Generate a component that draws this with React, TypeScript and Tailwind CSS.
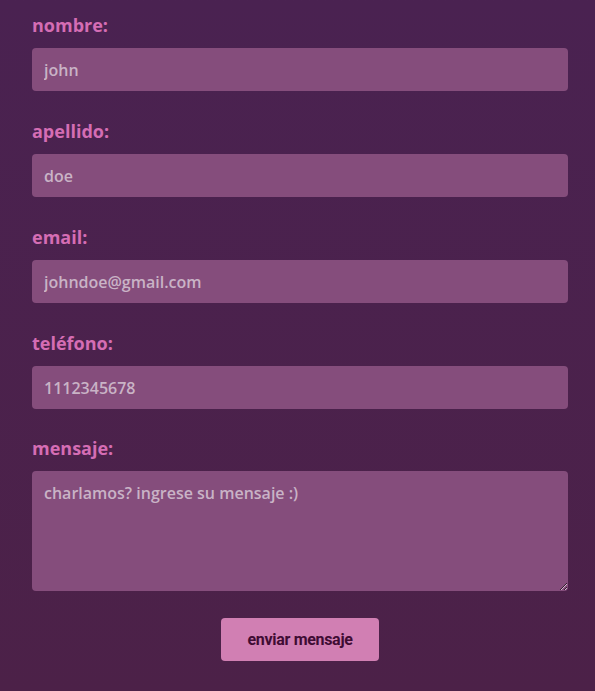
import React from 'react';

const fields = [
  { label: 'nombre:', placeholder: 'john', type: 'text' },
  { label: 'apellido:', placeholder: 'doe', type: 'text' },
  { label: 'email:', placeholder: 'johndoe@gmail.com', type: 'email' },
  { label: 'teléfono:', placeholder: '1112345678', type: 'tel' },
];

const inputClass =
  'w-full rounded bg-[#854d7c] px-3 text-[16px] font-semibold text-[#e6d6e4] placeholder:text-[#c9b3c6] outline-none';

const labelClass = 'mb-[10px] h-[28px] text-[18px] leading-[30px] font-bold text-[#d56db4]';

const App: React.FC = () => {
  return (
    <div
      className="min-h-[691px] w-full bg-gradient-to-b from-[#4a2251] to-[#4c2148] pl-8 pr-[27px] pt-[10px] pb-[30px]"
      style={{ fontFamily: '"Open Sans", Lato, sans-serif' }}
    >
      <form className="flex flex-col" onSubmit={(e) => e.preventDefault()}>
        {fields.map((f, i) => (
          <div key={f.label} className={`flex flex-col ${i === 3 ? 'mb-[24px]' : 'mb-[25px]'}`}>
            <label className={labelClass}>{f.label}</label>
            <input type={f.type} placeholder={f.placeholder} className={`${inputClass} h-[43px]`} />
          </div>
        ))}
        <div className="flex flex-col">
          <label className={labelClass}>mensaje:</label>
          <textarea
            placeholder="charlamos? ingrese su mensaje :)"
            className={`${inputClass} block h-[120px] py-[10px]`}
          />
        </div>
        <div className="mt-[27px] flex justify-center">
          <button
            type="submit"
            className="h-[43px] w-[158px] rounded bg-[#d17fb3] text-[16px] font-bold tracking-[-0.3px] text-[#3f0c33]"
            style={{ fontFamily: 'Roboto, sans-serif' }}
          >
            enviar mensaje
          </button>
        </div>
      </form>
    </div>
  );
};

export default App;
